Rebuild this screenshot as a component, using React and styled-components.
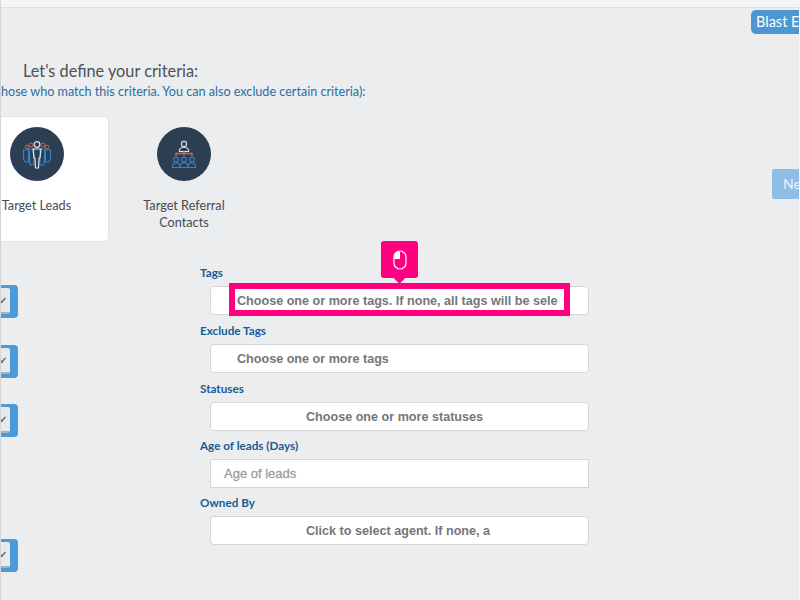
import React from "react";
import styled, { createGlobalStyle } from "styled-components";

const GlobalStyle = createGlobalStyle`
  html, body {
    margin: 0;
    padding: 0;
    width: 800px;
    height: 600px;
    overflow: hidden;
    background: #ecedef;
  }
`;

const Page = styled.div`
  position: relative;
  box-sizing: border-box;
  width: 800px;
  height: 600px;
  overflow: hidden;
  background: #ecedef;
  border-left: 1px solid #d4d5d8;
  border-right: 1px solid #f4f5f6;
  font-family: Lato, "Noto Sans", sans-serif;
`;

const TopStrip = styled.div`
  height: 7px;
  background: #f4f5f6;
  border-bottom: 1px solid #dfe0e3;
`;

const TopRow = styled.div`
  display: flex;
  justify-content: flex-end;
  height: 53px;
  padding-top: 2px;
  box-sizing: border-box;
`;

const BlastButton = styled.div`
  width: 48px;
  height: 24px;
  box-sizing: border-box;
  padding-left: 5px;
  background: #4b97d3;
  color: #fff;
  font-size: 14.500px;
  line-height: 24px;
  border-radius: 5px 0 0 5px;
  white-space: nowrap;
`;

const Heading = styled.h2`
  margin: 0 0 0 22px;
  font-size: 16.300px;
  font-weight: 400;
  line-height: 20px;
  color: #4c5158;
`;

const SubHeading = styled.p`
  margin: 2px 0 0 0;
  font-size: 12.600px;
  line-height: 18px;
  color: #2a6ea6;
  white-space: nowrap;
`;

const TargetRow = styled.div`
  display: flex;
  justify-content: space-between;
  margin-top: 15px;
  height: 126px;
`;

const Targets = styled.div`
  display: flex;
`;

const TargetCard = styled.div`
  box-sizing: border-box;
  flex: none;
  width: ${(p) => p.$width}px;
  margin-left: ${(p) => p.$offset}px;
  height: 126px;
  padding: 10px ${(p) => (p.$active ? 2 : 0)}px 0 0;
  border-radius: 5px;
  display: flex;
  flex-direction: column;
  align-items: center;
  background: ${(p) => (p.$active ? "#fff" : "transparent")};
  border: 1px solid ${(p) => (p.$active ? "#e2e3e6" : "transparent")};
`;

const IconCircle = styled.div`
  width: 54px;
  height: 54px;
  border-radius: 50%;
  background: #2c3e52;
  display: flex;
  align-items: center;
  justify-content: center;
`;

const TargetLabel = styled.div`
  margin-top: 16px;
  font-size: 12.700px;
  line-height: 17px;
  color: #444b55;
  text-align: center;
`;

const NextButton = styled.div`
  align-self: flex-start;
  margin-top: 53px;
  width: 27px;
  height: 30px;
  box-sizing: border-box;
  padding-left: 11px;
  background: #8fbde5;
  color: #eaf3fb;
  font-size: 14px;
  line-height: 30px;
  border-radius: 2px 0 0 2px;
`;

const Criteria = styled.div`
  display: grid;
  grid-template-columns: 199px 389px;
  margin-top: 23px;
`;

const ToggleColumn = styled.div`
  display: flex;
  flex-direction: column;
  padding-top: 20px;
`;

const Toggle = styled.div`
  box-sizing: border-box;
  width: 18px;
  height: 33px;
  margin-top: ${(p) => p.$gap}px;
  margin-left: -1px;
  padding: 3px 8px 4px 0;
  background: #4b9ad9;
  border-radius: 0 4px 4px 0;
`;

const ToggleFace = styled.div`
  height: 100%;
  padding-right: 3px;
  background: #e9e9e9;
  border-radius: 0 2px 2px 0;
  border-bottom: 2px solid #a9b0b6;
  box-sizing: border-box;
  display: flex;
  align-items: center;
  justify-content: flex-end;
  color: #66696e;
  font-size: 10px;
  line-height: 1;
`;

const FormColumn = styled.div`
  display: flex;
  flex-direction: column;
`;

const FieldLabel = styled.label`
  display: block;
  height: 16px;
  font-size: 11.700px;
  line-height: 14px;
  font-weight: 700;
  color: #175c97;
`;

const Field = styled.div`
  box-sizing: border-box;
  width: 379px;
  height: 29px;
  margin: 5px 0 ${(p) => p.$bottom ?? 8}px 10px;
  padding-left: ${(p) => p.$indent ?? 26}px;
  background: #fff;
  border: 1px solid #d6d6d8;
  border-radius: 4px;
  font-family: "Liberation Sans", Arial, sans-serif;
  font-size: 12.600px;
  font-weight: 700;
  line-height: 29px;
  color: #75767a;
  white-space: nowrap;
`;

const AgeInput = styled(Field)`
  border-radius: 0;
  font-size: 13px;
  font-weight: 400;
  line-height: 27px;
  -webkit-text-stroke: 0.3px #9b9ca0;
  color: #9b9ca0;
`;

const Highlight = styled.div`
  position: absolute;
  left: 228px;
  top: 283px;
  width: 341px;
  height: 33px;
  box-sizing: border-box;
  border: 6px solid #ff0080;
`;

const Pin = styled.div`
  position: absolute;
  left: 380px;
  top: 241px;
  width: 37px;
  height: 37px;
  background: #ff0080;
  border-radius: 3px;
  display: flex;
  align-items: center;
  justify-content: center;

  &::after {
    content: "";
    position: absolute;
    left: 14px;
    bottom: -4px;
    width: 9px;
    height: 9px;
    background: #ff0080;
    transform: rotate(45deg);
  }
`;

const LeadsIcon = () => (
  <svg width="30" height="30" viewBox="0 0 30 30" fill="none">
    <g stroke="#d9604e" strokeWidth="1">
      <circle cx="5" cy="8" r="1.800" />
      <circle cx="9" cy="6" r="2" />
      <circle cx="21" cy="6" r="2" />
      <circle cx="25" cy="8" r="1.800" />
    </g>
    <g stroke="#2f86c9" strokeWidth="1.200">
      <path d="M1.500 11h5v12h-3l-2-3z" />
      <path d="M7 10h5v16H8z" />
      <path d="M18 10h5l-1 16h-4z" />
      <path d="M23.500 11h5v9l-2 3h-3z" />
    </g>
    <g stroke="#dfe3e6" strokeWidth="1.200">
      <circle cx="15" cy="5.500" r="2.800" />
      <path d="M11 10h8l-1 9h-1l-.5 10h-3L13 19h-1z" />
    </g>
  </svg>
);

const ReferralIcon = () => (
  <svg width="30" height="30" viewBox="0 0 30 30" fill="none">
    <g stroke="#dfe3e6" strokeWidth="1.100">
      <circle cx="15" cy="5" r="2.600" />
      <path d="M10.500 12.500v-1.500c0-1.300 1.500-2.300 2.800-2.800h3.400c1.300.5 2.800 1.500 2.800 2.800v1.500z" />
    </g>
    <g stroke="#d9604e" strokeWidth="1.600">
      <path d="M7 17v-2.500h16V17" />
      <path d="M15 12.500v4" />
    </g>
    <g stroke="#2f86c9" strokeWidth="1.100">
      <circle cx="7" cy="20.500" r="2.400" />
      <circle cx="15" cy="20.500" r="2.400" />
      <circle cx="23" cy="20.500" r="2.400" />
      <path d="M3.500 28.500v-2c0-1.300 1.200-2.200 2.500-2.700h2c1.300.5 2.500 1.400 2.500 2.700v2z" />
      <path d="M11 28.500v-2c0-1.300 1.200-2.200 2.500-2.700h3c1.300.5 2.500 1.400 2.500 2.700v2z" />
      <path d="M19.500 28.500v-2c0-1.300 1.200-2.200 2.500-2.700h2c1.300.5 2.500 1.400 2.500 2.700v2z" />
    </g>
  </svg>
);

const MouseIcon = () => (
  <svg width="14" height="20" viewBox="0 0 14 20" fill="none">
    <rect x="1" y="1" width="12" height="18" rx="6" stroke="#fff" strokeWidth="1.200" />
    <path d="M7 1.500a5.500 5.500 0 0 0-5.500 5.500V9H7z" fill="#fff" />
  </svg>
);

const App = () => (
  <>
    <GlobalStyle />
    <Page>
      <TopStrip />
      <TopRow>
        <BlastButton>Blast E</BlastButton>
      </TopRow>
      <Heading>Let's define your criteria:</Heading>
      <SubHeading>hose who match this criteria. You can also exclude certain criteria):</SubHeading>
      <TargetRow>
        <Targets>
          <TargetCard $active $width={143} $offset={-35}>
            <IconCircle><LeadsIcon /></IconCircle>
            <TargetLabel>Target Leads</TargetLabel>
          </TargetCard>
          <TargetCard $width={110} $offset={20}>
            <IconCircle><ReferralIcon /></IconCircle>
            <TargetLabel>Target Referral<br />Contacts</TargetLabel>
          </TargetCard>
        </Targets>
        <NextButton>Ne</NextButton>
      </TargetRow>
      <Criteria>
        <ToggleColumn>
          <Toggle $gap={0}><ToggleFace>✔</ToggleFace></Toggle>
          <Toggle $gap={27}><ToggleFace>✔</ToggleFace></Toggle>
          <Toggle $gap={26}><ToggleFace>✔</ToggleFace></Toggle>
          <Toggle $gap={102}><ToggleFace>✔</ToggleFace></Toggle>
        </ToggleColumn>
        <FormColumn>
          <FieldLabel>Tags</FieldLabel>
          <Field>Choose one or more tags. If none, all tags will be sele</Field>
          <FieldLabel>Exclude Tags</FieldLabel>
          <Field>Choose one or more tags</Field>
          <FieldLabel>Statuses</FieldLabel>
          <Field $indent={95} $bottom={7}>Choose one or more statuses</Field>
          <FieldLabel>Age of leads (Days)</FieldLabel>
          <AgeInput $indent={13} $bottom={7}>Age of leads</AgeInput>
          <FieldLabel>Owned By</FieldLabel>
          <Field $indent={95}>Click to select agent. If none, a</Field>
        </FormColumn>
      </Criteria>
      <Highlight />
      <Pin><MouseIcon /></Pin>
    </Page>
  </>
);

export default App;
